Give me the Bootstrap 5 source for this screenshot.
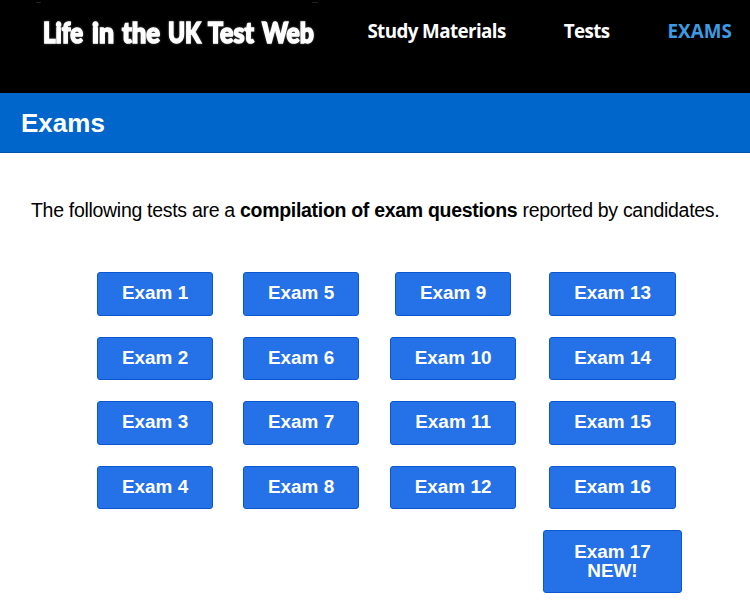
<!DOCTYPE html>
<html lang="en">
<head>
    <meta charset="utf-8">
    <meta name="viewport" content="width=device-width, initial-scale=1">
    <title>Life in the UK Test Web - Exams</title>
    <link href="https://cdn.jsdelivr.net/npm/bootstrap@5.3.3/dist/css/bootstrap.min.css" rel="stylesheet">
    <style>
        body {
            font-family: "Liberation Sans", Arial, sans-serif;
            color: #000;
            background: #fff;
            overflow-x: hidden;
        }
        .site-header {
            height: 93px;
            background: #000;
            padding: 0 18px 0 34px;
        }
        .site-logo text {
            font-family: Lato, sans-serif;
            font-weight: 900;
            font-size: 27.5px;
            fill: #fff;
            stroke: #fff;
            stroke-width: 1.5px;
        }
        .site-logo .logo-words {
            filter: drop-shadow(0 0 1px #555);
        }
        .site-nav {
            gap: 58px;
            font: bold 18.8px/25px "Open Sans", "Noto Sans", sans-serif;
            padding-top: 19px;
        }
        .site-nav .nav-link {
            color: #fff;
            padding: 0;
            letter-spacing: -.6px;
        }
        .site-nav .nav-link.active {
            color: #3c9be2;
            letter-spacing: .1px;
        }
        .page-title {
            height: 60px;
            background: #0066cc;
            border-bottom: 1px solid #0054b0;
            padding-left: 21px;
        }
        .page-title h1 {
            font-size: 26px;
            line-height: 30px;
        }
        .intro {
            font-size: 19.5px;
            line-height: 24px;
            letter-spacing: -.3px;
            padding: 45px 0 0 31px;
        }
        .exam-list {
            display: grid;
            grid-template-columns: 146px 146px 158px 161px;
            padding: 50px 0 0 82px;
        }
        .exam-col {
            gap: 21px;
        }
        .btn-exam {
            --bs-btn-color: #fff;
            --bs-btn-bg: #2571e8;
            --bs-btn-border-color: #0b57cd;
            --bs-btn-hover-color: #fff;
            --bs-btn-hover-bg: #0b57cd;
            --bs-btn-border-radius: 3px;
            --bs-btn-font-size: 18.9px;
            --bs-btn-font-weight: 700;
            --bs-btn-line-height: 19px;
            padding: 10.1px 24px 12.5px 24.2px;
        }
        .btn-exam-new {
            padding: 10.9px 29.7px 12.1px;
        }
    </style>
</head>
<body>
    <header class="site-header d-flex justify-content-between align-items-start">
        <a href="#" aria-label="Home">
            <svg class="site-logo d-block" width="288" height="60" viewBox="34 0 288 60">
                <path d="M36 2.5h5M312 2.5h6" stroke="#222"/>
                <g class="logo-words">
                    <text x="43" y="42.5" textLength="40" lengthAdjust="spacingAndGlyphs">Life</text>
                    <text x="92" y="42.5" textLength="22" lengthAdjust="spacingAndGlyphs">in</text>
                    <text x="122" y="42.5" textLength="38" lengthAdjust="spacingAndGlyphs">the</text>
                    <text x="168" y="42.5" textLength="33" lengthAdjust="spacingAndGlyphs">UK</text>
                    <text x="208" y="42.5" textLength="46" lengthAdjust="spacingAndGlyphs">Test</text>
                    <text x="262" y="42.5" textLength="52" lengthAdjust="spacingAndGlyphs">Web</text>
                </g>
            </svg>
        </a>
        <nav class="site-nav nav flex-nowrap text-nowrap">
            <a class="nav-link" href="#">Study Materials</a>
            <a class="nav-link" href="#">Tests</a>
            <a class="nav-link active" href="#">EXAMS</a>
        </nav>
    </header>

    <div class="page-title d-flex align-items-center">
        <h1 class="text-white fw-bold mb-0">Exams</h1>
    </div>

    <main>
        <p class="intro text-nowrap mb-0">The following tests are a <b>compilation of exam questions</b> reported by candidates.</p>

        <div class="exam-list">
            <div class="exam-col d-flex flex-column align-items-center">
                <a class="btn btn-exam" href="#">Exam 1</a>
                <a class="btn btn-exam" href="#">Exam 2</a>
                <a class="btn btn-exam" href="#">Exam 3</a>
                <a class="btn btn-exam" href="#">Exam 4</a>
            </div>
            <div class="exam-col d-flex flex-column align-items-center">
                <a class="btn btn-exam" href="#">Exam 5</a>
                <a class="btn btn-exam" href="#">Exam 6</a>
                <a class="btn btn-exam" href="#">Exam 7</a>
                <a class="btn btn-exam" href="#">Exam 8</a>
            </div>
            <div class="exam-col d-flex flex-column align-items-center">
                <a class="btn btn-exam" href="#">Exam 9</a>
                <a class="btn btn-exam" href="#">Exam 10</a>
                <a class="btn btn-exam" href="#">Exam 11</a>
                <a class="btn btn-exam" href="#">Exam 12</a>
            </div>
            <div class="exam-col d-flex flex-column align-items-center">
                <a class="btn btn-exam" href="#">Exam 13</a>
                <a class="btn btn-exam" href="#">Exam 14</a>
                <a class="btn btn-exam" href="#">Exam 15</a>
                <a class="btn btn-exam" href="#">Exam 16</a>
                <a class="btn btn-exam btn-exam-new" href="#">Exam 17<br>NEW!</a>
            </div>
        </div>
    </main>

    <script src="https://cdn.jsdelivr.net/npm/bootstrap@5.3.3/dist/js/bootstrap.bundle.min.js"></script>
</body>
</html>
